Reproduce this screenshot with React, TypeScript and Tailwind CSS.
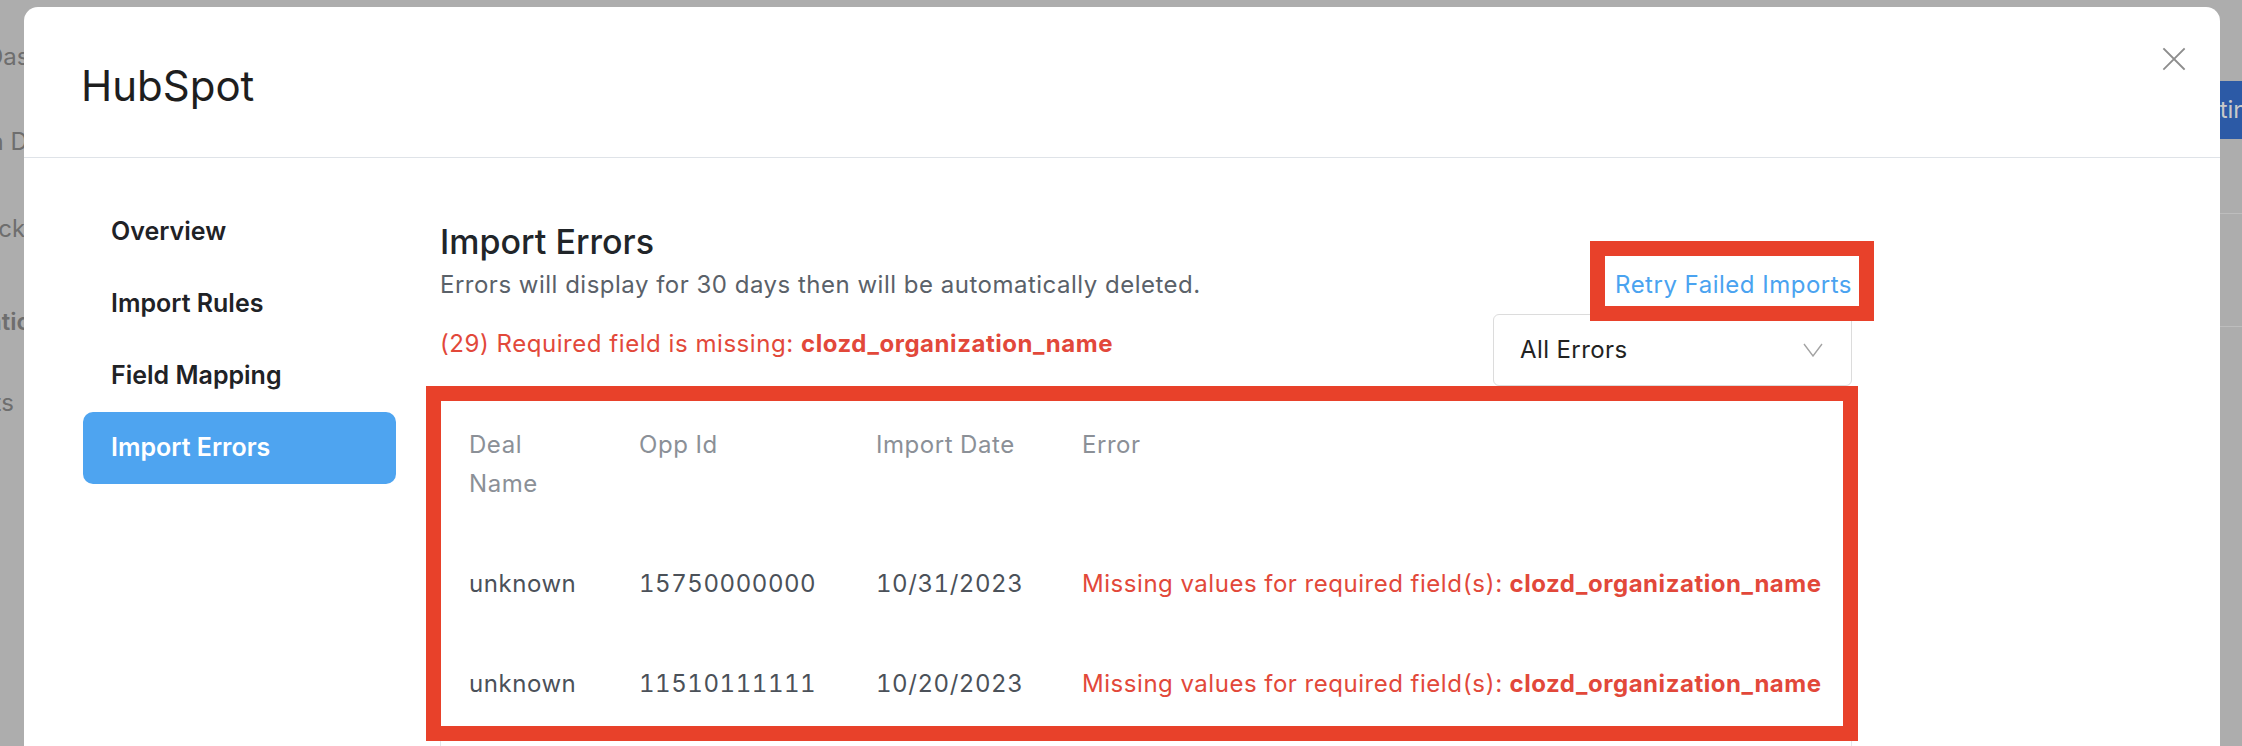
import React from 'react';

// ── Page underneath the modal (only slivers show) ─────────────────────────────
function BackdropPage() {
  return (
    <div className="flex h-full w-full justify-between bg-[#adadad]">
      <div className="flex w-[24px] flex-col overflow-hidden text-[24px] leading-[30px] text-[#6e6e6e] whitespace-nowrap">
        <span className="mt-[42px] ml-[-14px]">Dashboard</span>
        <span className="mt-[55px] ml-[-40px]">Win Dashboard</span>
        <span className="mt-[57px] ml-[-86px]">Feedback</span>
        <span className="mt-[63px] ml-[-80px] font-semibold">Integrations</span>
        <span className="mt-[51px] ml-[-74px]">Reports</span>
      </div>
      <div className="flex w-[22px] flex-col overflow-hidden">
        <div className="mt-[81px] flex h-[58px] items-center whitespace-nowrap bg-[#2c5aa6] text-[24px] text-[#c9c9c9]">
          <span className="ml-[-37px]">Settings</span>
        </div>
        <div className="mt-[74px] h-px bg-[#bdbdbd]" />
        <div className="mt-[112px] h-px bg-[#bdbdbd]" />
      </div>
    </div>
  );
}

function CloseIcon() {
  return (
    <svg width="24" height="24" viewBox="0 0 24 24" fill="none" stroke="#8d8d8d" strokeWidth="1.8" strokeLinecap="square">
      <path d="M2 2L22 22M22 2L2 22" />
    </svg>
  );
}

function Chevron() {
  return (
    <svg width="20" height="14" viewBox="0 0 20 14" fill="none" stroke="#a3a3a3" strokeWidth="1.4">
      <path d="M1 1L10 13L19 1" />
    </svg>
  );
}

function NavItem({ label, active }: { label: string; active?: boolean }) {
  return (
    <div
      className={
        active
          ? 'flex h-[72px] items-center rounded-[10px] bg-[#4ea4f0] px-[28px] text-[25px] font-semibold text-white'
          : 'flex h-[72px] items-center rounded-[10px] px-[28px] text-[25px] font-semibold text-[#1f2226]'
      }
    >
      {label}
    </div>
  );
}

const rows = [
  { deal: 'unknown', opp: '15750000000', date: '10/31/2023' },
  { deal: 'unknown', opp: '11510111111', date: '10/20/2023' },
];

export default function App() {
  return (
    <div className="relative h-[746px] w-[2242px] overflow-hidden font-['Inter',sans-serif]">
      <BackdropPage />

      {/* Modal */}
      <div className="absolute left-[24px] right-[22px] top-[7px] bottom-[-40px] rounded-t-[14px] bg-white">
        <div className="relative h-[151px] border-b border-[#dfe3e8] px-[57px] pt-[54px]">
          <h2 className="text-[42px] leading-[50px] text-[#1e1e1e]">HubSpot</h2>
          <button className="absolute right-[34px] top-[40px]">
            <CloseIcon />
          </button>
        </div>

        <div className="flex pt-[38px] pl-[59px]">
          <nav className="flex w-[313px] flex-col">
            <NavItem label="Overview" />
            <NavItem label="Import Rules" />
            <NavItem label="Field Mapping" />
            <NavItem label="Import Errors" active />
          </nav>

          <div className="ml-[44px] mt-[26px] flex w-[1412px] flex-col">
            <h1 className="text-[34px] leading-[40px] font-medium text-[#212529]">Import Errors</h1>
            <div className="mt-[7px] flex items-start justify-between text-[24px] leading-[32px] tracking-[0.5px]">
              <p className="text-[#5a6169]">Errors will display for 30 days then will be automatically deleted.</p>
              <a className="text-[#4aa3f0]">Retry Failed Imports</a>
            </div>
            <div className="mt-[13px] flex items-start justify-between">
              <p className="mt-[14px] text-[24px] leading-[32px] tracking-[0.55px] text-[#e2483a]">
                (29) Required field is missing: <strong className="font-bold">clozd_organization_name</strong>
              </p>
              <div className="flex h-[72px] w-[359px] items-center justify-between rounded-[6px] border border-[#dcdcdc] pl-[26px] pr-[28px] text-[24px] tracking-[0.4px] text-[#222222]">
                All Errors
                <Chevron />
              </div>
            </div>

            <div className="mt-[8px] h-[420px] rounded-[6px] border border-[#e3e6ea] px-[28px] text-[24px] leading-[39px] tracking-[0.55px] tabular-nums">
              <div className="grid grid-cols-[170px_237px_206px_1fr] py-[30px] text-[#8b9097]">
                <span className="w-[80px]">Deal Name</span>
                <span>Opp Id</span>
                <span>Import Date</span>
                <span>Error</span>
              </div>
              {rows.map((r) => (
                <div key={r.opp} className="grid h-[100px] grid-cols-[170px_237px_206px_1fr] items-center text-[#4b5159]">
                  <span>{r.deal}</span>
                  <span>{r.opp}</span>
                  <span>{r.date}</span>
                  <span className="text-[#e2483a]">
                    Missing values for required field(s): <strong className="font-bold">clozd_organization_name</strong>
                  </span>
                </div>
              ))}
            </div>
          </div>
        </div>
      </div>

      {/* Red annotation boxes drawn over the screenshot */}
      <div className="pointer-events-none absolute left-[1590px] top-[241px] h-[80px] w-[284px] border-[15px] border-[#e8412a]" />
      <div className="pointer-events-none absolute left-[426px] top-[386px] h-[355px] w-[1432px] border-[15px] border-[#e8412a]" />
    </div>
  );
}
